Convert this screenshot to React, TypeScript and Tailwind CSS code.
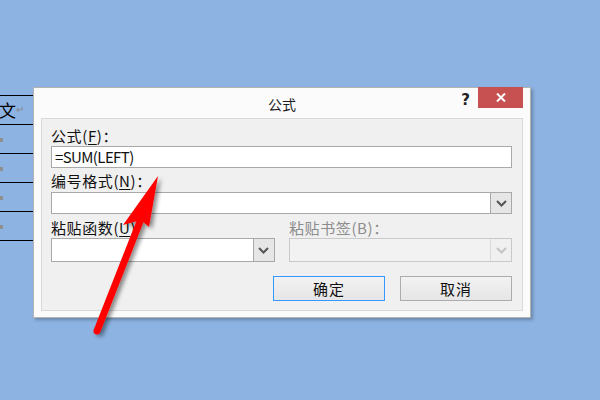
const cjk = { fontFamily: '"Noto Sans CJK SC", "Noto Sans", sans-serif' };

const Chevron = ({ disabled }: { disabled?: boolean }) => (
  <svg width="11" height="7" viewBox="0 0 11 7">
    <path d="M1 1 L5.5 5.5 L10 1" fill="none" stroke={disabled ? '#c4c4c4' : '#555555'} strokeWidth="2" />
  </svg>
);

const Select = ({ width, disabled }: { width: string; disabled?: boolean }) => (
  <div
    className={`${width} h-[24px] flex border ${
      disabled ? 'border-[#c9c9c9] bg-[#f2f2f2]' : 'border-[#a9a9a9] bg-white'
    }`}
  >
    <div className="flex-1" />
    <div
      className={`w-[21px] flex items-center justify-center border-l ${
        disabled ? 'border-[#dadada] bg-[#f0f0f0]' : 'border-[#a9a9a9] bg-[#e6e6e6]'
      }`}
    >
      <Chevron disabled={disabled} />
    </div>
  </div>
);

const DocFragment = () => (
  <div className="absolute left-0 top-[95px] w-[33px]" style={cjk}>
    {[0, 1, 2, 3, 4].map((i) => (
      <div key={i} className="h-[29px] border-t border-black relative">
        {i === 0 ? (
          <div className="flex items-end text-[17px] leading-none text-black pt-[5px] -ml-[1px]">
            文<span className="text-[10px] text-[#8a8a8a] mb-[4px]">↵</span>
          </div>
        ) : (
          <div className="absolute left-0 top-[13px] w-[3px] h-[4px] bg-[#8f8f8f]" />
        )}
      </div>
    ))}
    <div className="border-t border-black" />
  </div>
);

const Arrow = () => (
  <svg className="absolute left-0 top-0 pointer-events-none" width="600" height="400" viewBox="0 0 600 400">
    <defs>
      <filter id="sh" x="-50%" y="-50%" width="200%" height="200%">
        <feDropShadow dx="3" dy="2" stdDeviation="2" floodColor="#000" floodOpacity="0.45" />
      </filter>
    </defs>
    <g filter="url(#sh)">
      <line x1="97" y1="331" x2="141" y2="219" stroke="#ff0000" strokeWidth="7" strokeLinecap="round" />
      <polygon points="158,176 149,227 141,220 123,225" fill="#ff0000" />
    </g>
  </svg>
);

export default function App() {
  return (
    <div className="relative w-[600px] h-[400px] overflow-hidden bg-[#8db3e2]">
      <DocFragment />

      {/* dialog window */}
      <div
        className="absolute left-[33px] top-[87px] w-[498px] h-[231px] bg-[#fbfbfb] border border-[#b4b4b4] shadow-[2px_2px_3px_rgba(0,0,0,0.25)] flex flex-col"
        style={cjk}
      >
        <div className="h-[30px] relative flex items-center justify-center shrink-0">
          <span className="text-[14px] text-[#1e1e1e] mt-[2px]">公式</span>
          <span
            className="absolute right-[60px] top-[1px] text-[15px] font-bold text-[#222]"
            style={{ fontFamily: '"DejaVu Sans", sans-serif' }}
          >
            ?
          </span>
          <div className="absolute right-[7px] top-[-1px] w-[45px] h-[21px] bg-[#c75050] flex items-center justify-center">
            <svg width="10" height="9" viewBox="0 0 10 9">
              <path d="M1 0.5 L9 8.5 M9 0.5 L1 8.5" stroke="#fff" strokeWidth="2" />
            </svg>
          </div>
        </div>

        <div className="mx-[7px] h-[193px] bg-[#f0f0f0] border border-[#d9d9d9] pl-[9px] pr-[10px] flex flex-col">
          <div className="h-[20px] mt-[6px] flex items-center text-[15px] text-[#111] leading-none tracking-[0.6px]">
            公式(<span className="underline underline-offset-2">F</span>)：
          </div>
          <div className="h-[22px] mt-[1px] border border-[#a9a9a9] bg-white flex items-center pl-[3px] text-[15px] text-[#111] tracking-[-0.6px]">
            =SUM(LEFT)
          </div>
          <div className="h-[20px] mt-[2px] flex items-center text-[15px] text-[#111] leading-none tracking-[0.6px]">
            编号格式(<span className="underline underline-offset-2">N</span>)：
          </div>
          <div className="mt-[2px] h-[22px] flex border border-[#a9a9a9] bg-white">
            <div className="flex-1" />
            <div className="w-[21px] flex items-center justify-center border-l border-[#a9a9a9] bg-[#e6e6e6]">
              <Chevron />
            </div>
          </div>
          <div className="h-[20px] mt-[3px] flex items-center text-[15px] leading-none tracking-[0.6px]">
            <div className="w-[238px] text-[#111]">
              粘贴函数(<span className="underline underline-offset-2">U</span>)
            </div>
            <div className="text-[#8c8c8c]">粘贴书签(B)：</div>
          </div>
          <div className="mt-[1px] flex gap-[14px]">
            <Select width="w-[224px]" />
            <Select width="w-[224px]" disabled />
          </div>
          <div className="mt-[14px] flex justify-end gap-[15px]">
            <button className="w-[112px] h-[25px] border border-[#3399ff] bg-gradient-to-b from-[#f2f2f2] to-[#e6e6e6] text-[15px] text-[#111] leading-none tracking-[1px]">
              确定
            </button>
            <button className="w-[112px] h-[25px] border border-[#acacac] bg-gradient-to-b from-[#f2f2f2] to-[#e6e6e6] text-[15px] text-[#111] leading-none tracking-[1px]">
              取消
            </button>
          </div>
        </div>
      </div>

      <Arrow />
    </div>
  );
}
